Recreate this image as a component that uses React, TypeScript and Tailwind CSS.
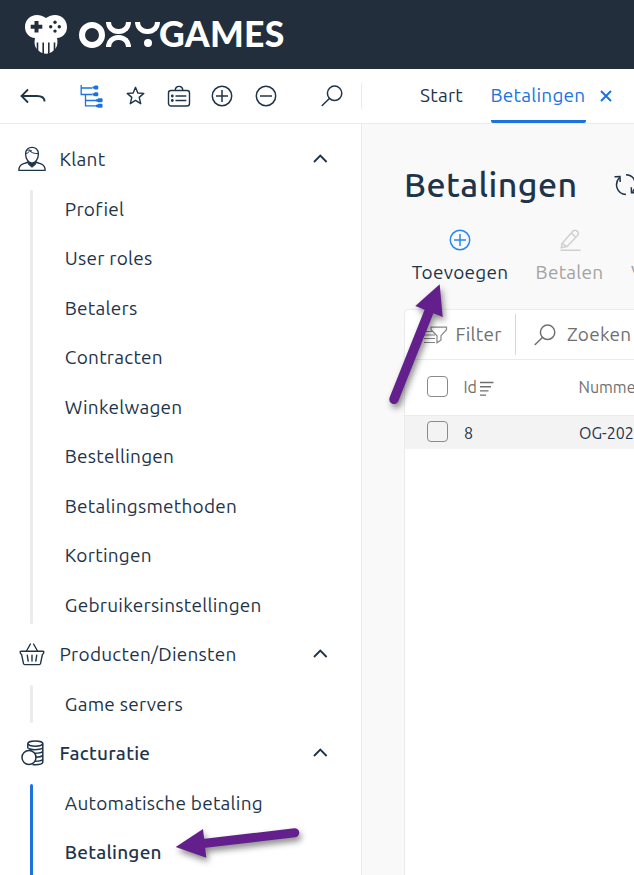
import React from 'react';

type MenuItem = { label: string; selected?: boolean };

const KLANT: MenuItem[] = [
  { label: 'Profiel' },
  { label: 'User roles' },
  { label: 'Betalers' },
  { label: 'Contracten' },
  { label: 'Winkelwagen' },
  { label: 'Bestellingen' },
  { label: 'Betalingsmethoden' },
  { label: 'Kortingen' },
  { label: 'Gebruikersinstellingen' },
];

const PRODUCTEN: MenuItem[] = [{ label: 'Game servers' }];

const FACTURATIE: MenuItem[] = [{ label: 'Automatische betaling' }, { label: 'Betalingen', selected: true }];

const UserIcon = () => (
  <svg width="28" height="26" viewBox="0 0 28 26" fill="none" stroke="currentColor" strokeWidth="1.3" strokeLinejoin="round">
    <path d="M7.600 8C7.500 3.500 10.500 1.400 14 1.400S20.500 3.500 20.400 8c0 5-3 9.200-6.400 9.200S7.600 13 7.600 8Z" />
    <path d="M7.800 7.500c2.200-.2 3.200-1.300 3.700-3 1.500 2 4.500 3.200 8.700 3.200M9.500 4.500c1.600-.8 3.200-.5 4.500.8" strokeWidth="1" />
    <path d="M10.500 15.500c-1 1.300-3.300 1.700-5.400 2.400C2.200 18.800 1 21 .8 24.300h26.400c-.2-3.300-1.400-5.500-4.300-6.400-2.100-.7-4.400-1.100-5.400-2.400" />
    <path d="M10.400 16.300c2.200 1.400 5 1.400 7.200 0l.2 1.700L14 21.300 10.200 18z" fill="currentColor" strokeWidth="1" />
  </svg>
);

const BasketIcon = () => (
  <svg className="-ml-[0.5px]" width="28" height="26" viewBox="0 0 28 26" fill="none" stroke="currentColor" strokeWidth="1.4" strokeLinecap="round" strokeLinejoin="round">
    <path d="M3 10.200h22q.9 0 .8.900l-.3 1.300q-.2.700-1 .7l-2 9.500q-.3 1-1.300 1H6.800q-1 0-1.300-1l-2-9.500q-.8 0-1-.7l-.3-1.300q-.1-.9.800-.9Z" />
    <path d="M8.500 10 12.400 3M19.500 10 15.600 3M9.300 14.300l.9 5.800M14 14.300v5.800M18.700 14.300l-.9 5.800" />
  </svg>
);

const CoinsIcon = () => (
  <svg className="-ml-[0.5px]" width="28" height="26" viewBox="0 0 28 26" fill="none" stroke="currentColor" strokeWidth="1.500">
    <ellipse cx="17.300" cy="3.600" rx="7.500" ry="2.600" />
    <path d="M9.800 3.600v5M24.800 3.600v18.500c0 1.800-3.400 2.700-7.500 2.700q-1.500 0-2.800-.3M10.500 8.500c3.500 1.900 14.300 1.300 14.300-1.200M16.500 13.300c4.200 0 8.300-.9 8.300-2.500M17.300 17.200c3.700 0 7.500-1 7.500-2.500M16.700 21.200c4.100 0 8.100-1 8.100-2.500" />
    <circle cx="11" cy="17.500" r="7" />
  </svg>
);

const Chevron = () => (
  <svg className="mr-[33px]" width="16" height="10" viewBox="0 0 16 10" fill="none" stroke="currentColor" strokeWidth="1.900">
    <path d="M2 8 8.300 1.700 14.600 8" />
  </svg>
);

const Magnifier: React.FC<{ className?: string }> = ({ className }) => (
  <svg className={className} width="22" height="22" viewBox="0 0 22 22" fill="none" stroke="currentColor" strokeWidth="1.500" strokeLinecap="round">
    <circle cx="13.600" cy="8.300" r="7.200" />
    <path d="M8.400 13.500 1.200 20.500" />
  </svg>
);

const PlusCircle: React.FC<{ minus?: boolean }> = ({ minus }) => (
  <svg width="22" height="22" viewBox="0 0 22 22" fill="none" stroke="currentColor" strokeWidth="1.500">
    <circle cx="11" cy="11" r="9.700" />
    <path d={minus ? 'M5 11h12' : 'M5 11h12M11 5v12'} />
  </svg>
);

const Section: React.FC<{
  icon: React.ReactNode;
  title: string;
  items: MenuItem[];
  active?: boolean;
}> = ({ icon, title, items, active }) => (
  <section>
    <div className="flex h-[49.5px] items-center pl-[18px]">
      <span className="w-[41.5px]">{icon}</span>
      <span className={`flex-1 ${active ? 'font-medium' : ''}`}>{title}</span>
      <Chevron />
    </div>
    <div className="flex pl-[30px]">
      <div className={`mt-[5.5px] w-[3px] rounded-sm ${active ? '-mb-[4px] bg-[#1a73e0]' : 'mb-[6px] bg-[#ebebeb]'}`} />
      <ul className="pl-[31.8px]">
        {items.map((item) => (
          <li key={item.label} className={`flex h-[49.5px] items-center ${item.selected ? 'font-medium' : ''}`}>
            {item.label}
          </li>
        ))}
      </ul>
    </div>
  </section>
);

const Logo = () => (
  <div className="flex h-full items-center pl-[25px]">
    <svg width="42" height="40" viewBox="0 0 42 40" className="shrink-0">
      <path
        d="M21 3C24 1 27 0 30 0c7 0 12 5 12 12 0 6-4 10.500-10 11 1.500 7-1 11-4 13-2 1.800-4.500 2.800-7 2.800s-5-1-7-2.800c-3-2-5.500-6-4-13C4 22.500 0 18 0 12 0 5 5 0 12 0c3 0 6 1 9 3Z"
        fill="#fff"
      />
      <path d="M9.500 6h4v3.800h3.800v4h-3.800v3.800h-4v-3.800H5.700v-4h3.800z" fill="#222e3b" />
      <g fill="#222e3b">
        <circle cx="30" cy="7.300" r="1.700" />
        <circle cx="25.700" cy="11.700" r="1.700" />
        <circle cx="34.300" cy="11.700" r="1.700" />
        <circle cx="30" cy="16.100" r="1.700" />
        <path d="M11.700 27.500h1.600V36h-1.600zM17.400 27.500H19V40h-1.600zM23 27.500h1.600V40H23zM28.700 27.500h1.600V36h-1.600z" />
      </g>
    </svg>
    <div className="ml-[12px] flex items-center text-white">
      <div className="size-[26px] rounded-full border-[6px] border-white" />
      <div className="ml-[1px] flex h-[25px] w-[25px] flex-col justify-between">
        <div className="h-[12px] rounded-b-full border-[5px] border-t-0 border-white" />
        <div className="h-[12px] rounded-t-full border-[5px] border-b-0 border-white" />
      </div>
      <div className="ml-[4px] flex h-[25px] w-[25px] flex-col items-center justify-between">
        <div className="h-[12px] w-full rounded-b-full border-[5px] border-t-0 border-white" />
        <div className="size-[8px] rounded-full bg-white" />
      </div>
      <span className="-ml-px -mt-[2px] font-['Lato',sans-serif] text-[35.500px] leading-[25px] font-black tracking-[0.3px]">GAMES</span>
    </div>
  </div>
);

const Toolbar = () => (
  <div className="flex h-[55px] items-center border-b border-[#ebebeb] bg-white">
    <div className="flex h-full w-[362px] shrink-0 items-center pb-px pl-[20px]">
      <svg className="shrink-0" width="26" height="16" viewBox="0 0 26 16" fill="none" stroke="currentColor" strokeWidth="1.800">
        <path d="M8 1.500 1.500 8 8 14.500M1.500 8h15.500c5 0 7.500 1.200 7.500 5.500" />
      </svg>
      <svg className="ml-[34px] shrink-0 text-[#1a73e0]" width="23" height="24" viewBox="0 0 23 24" fill="none" stroke="currentColor" strokeWidth="1.300">
        <path d="M1.200 1v9.500h11M1.200 4h11M5.500 10.500v11.300h11M5.500 16.500h11" />
        <path
          d="M12.500 2.500h1.200l1.200-1h2.200q1.200 0 1.200 1.200v1.500q0 1.200-1.200 1.200h-2.200q-1.200 0-1.200-.8h-1.200zM12.500 9.300h1.200l1.200-1h2.200q1.200 0 1.200 1.200V11q0 1.200-1.200 1.200h-2.200q-1.200 0-1.200-.8h-1.200zM16 15.300h1.200l1.200-1h3q1.200 0 1.200 1.200V17q0 1.200-1.200 1.200h-3q-1.200 0-1.200-.8H16zM16 20.800h1.200l1.200-1h3q1.200 0 1.200 1.200v1.500q0 1.200-1.200 1.200h-3q-1.200 0-1.200-.8H16z"
          fill="currentColor"
          stroke="none"
        />
      </svg>
      <svg className="ml-[22.500px] shrink-0" width="19" height="19" viewBox="0 0 19 19" fill="none" stroke="currentColor" strokeWidth="1.400" strokeLinejoin="round">
        <path d="m9.500 1.300 2.300 5.700 6 .4-4.600 4 1.500 6.300-5.200-3.300-5.200 3.300 1.500-6.300-4.600-4 6-.4z" />
      </svg>
      <svg className="ml-[22.500px] shrink-0" width="24" height="22" viewBox="0 0 24 22" fill="none" stroke="currentColor" strokeWidth="1.400">
        <rect x="1.500" y="5.500" width="21" height="15.500" rx="2.500" />
        <path d="M8.200 5.500c0-5.500 7.600-5.500 7.600 0M8.500 11h10.800M8.500 15.500h10.800" />
        <circle cx="5.300" cy="11" r=".7" fill="currentColor" />
        <circle cx="5.300" cy="15.500" r=".7" fill="currentColor" />
      </svg>
      <div className="ml-[20px] flex gap-[22px]">
        <PlusCircle />
        <PlusCircle minus />
      </div>
      <Magnifier className="ml-[44px]" />
      <div className="ml-auto h-[26px] w-px bg-[#ebebeb]" />
    </div>
    <nav className="flex h-full items-center pl-[58px]">
      <span className="w-[43px] pb-[2px]">Start</span>
      <div className="ml-[27.500px] flex h-full items-center text-[#1a73e0]">
        <span className="flex h-[54px] w-[95px] items-center rounded-xs border-b-[3px] border-[#1a73e0] pt-px">Betalingen</span>
        <svg className="ml-[14px]" width="12" height="12" viewBox="0 0 12 12" fill="none" stroke="currentColor" strokeWidth="2">
          <path d="m1 1 10 10M11 1 1 11" />
        </svg>
      </div>
    </nav>
  </div>
);

const Checkbox = () => <span className="mb-[2px] size-[21px] shrink-0 rounded-[4px] border border-[#8a8a8a] bg-transparent" />;

const Content = () => (
  <main className="min-w-0 flex-1 overflow-hidden pl-[42px] text-nowrap">
    <div className="flex h-[104px] items-center pt-[18px]">
      <h1 className="w-[173px] pb-[2px] text-[34px] font-medium tracking-[0.45px]">Betalingen</h1>
      <svg className="ml-[36.500px] shrink-0" width="24" height="24" viewBox="0 0 24 24" fill="none" stroke="currentColor" strokeWidth="1.500">
        <path d="M12 21.500C3 21.300-.3 11 5.500 4.500M12 1.800c9 .2 12.300 10.500 6.500 17" />
        <path d="M.5 3.800l5.500-.3.200 5.500M23 19.500l-5.500.3-.2-5.500" />
      </svg>
    </div>
    <div className="flex h-[81px] items-start pl-[7px] pt-px">
      <button className="flex w-[98px] shrink-0 flex-col items-center">
        <span className="flex h-[29px] items-start text-[#2b87f0]">
          <PlusCircle />
        </span>
        <span className="leading-[28px]">Toevoegen</span>
      </button>
      <button className="ml-[25.500px] flex w-[70px] shrink-0 flex-col items-center text-[#a3a3a3]">
        <span className="flex h-[29px] items-start">
          <svg width="22" height="22" viewBox="0 0 22 22" fill="none" stroke="#d0d0d0" strokeWidth="1.500" strokeLinejoin="round">
            <path d="M3 14.500 13.800 2.300q2-2 4.300-.1t.4 4.300L8 17.600l-5.800 1.200zM12.300 4l4.600 4.200M3 14.500l5 3.100M1.500 21.300h20" />
          </svg>
        </span>
        <span className="leading-[28px]">Betalen</span>
      </button>
      <button className="ml-[26.500px] pt-[29px] leading-[28px] text-[#a3a3a3]">Verwijderen</button>
    </div>
    <div className="h-[600px] w-[600px] rounded-tl-[4px] border border-[#ebebeb] bg-white text-[#707070]">
      <div className="flex h-[50px] items-center border-b border-[#ebebeb]">
        <svg className="ml-[17px]" width="26" height="18" viewBox="0 0 26 18" fill="none" stroke="#858585" strokeWidth="1.200">
          <path d="M2 5.500h9M2 9h11M2 12.500h11M2 16.500h11" />
          <path d="M9 1.200h15.500v2.500l-5.500 6V14l-4 2.800v-7L9 3.700z" fill="#fff" />
        </svg>
        <span className="ml-[7.500px] w-[60.500px]">Filter</span>
        <div className="-ml-[1px] h-[41px] w-px bg-[#d8d8d8]" />
        <Magnifier className="ml-[18px] shrink-0" />
        <span className="ml-[11px]">Zoeken</span>
      </div>
      <div className="flex h-[55px] items-center pl-[22px] text-[16px] tracking-normal">
        <Checkbox />
        <div className="ml-[15.500px] flex w-[115px] items-center pb-[2px]">
          Id
          <svg className="ml-[3px] mt-[4px]" width="14" height="16" viewBox="0 0 14 16" fill="none" stroke="currentColor" strokeWidth="1.400">
            <path d="M0 1.500h13.500M0 5.700h11M0 9.900h8.500M0 14.100h6" />
          </svg>
        </div>
        <span className="pb-[2px]">Nummer</span>
      </div>
      <div className="flex h-[34px] items-center border-t border-[#ebebeb] bg-[#f3f3f3] pl-[22px] text-[16px] tracking-normal text-[#1e344b]">
        <Checkbox />
        <span className="ml-[16px] w-[115px]">8</span>
        <span>OG-20230008</span>
      </div>
    </div>
  </main>
);

// Purple pointer arrows drawn on top of the page
const Arrows = () => (
  <svg
    className="pointer-events-none absolute inset-0 drop-shadow-[2px_4px_3px_rgba(0,0,0,0.45)]"
    width="634"
    height="875"
    viewBox="0 0 634 875"
    fill="#63208c"
    stroke="#63208c"
    strokeLinecap="round"
  >
    <path d="M394 399.300 430 309" strokeWidth="9.500" />
    <path d="m439.700 284.300 3 32.700-27.400-11z" stroke="none" />
    <path d="M294.800 832.800 203 843.500" strokeWidth="9" />
    <path d="m175.700 847 27.300-18 3.300 28.700z" stroke="none" />
  </svg>
);

const App: React.FC = () => (
  <div className="relative flex h-[875px] w-[634px] flex-col overflow-hidden bg-[#f9f9f9] font-['Ubuntu','Noto_Sans',sans-serif] text-[19px] tracking-[0.25px] text-[#1e344b]">
    <header className="h-[69px] shrink-0 bg-[#222e3b]">
      <Logo />
    </header>
    <div className="shrink-0">
      <Toolbar />
    </div>
    <div className="flex min-h-0 flex-1">
      <aside className="w-[362px] shrink-0 overflow-hidden border-r border-[#ebebeb] bg-white pt-[10.7px]">
        <Section icon={<UserIcon />} title="Klant" items={KLANT} />
        <Section icon={<BasketIcon />} title="Producten/Diensten" items={PRODUCTEN} />
        <Section icon={<CoinsIcon />} title="Facturatie" items={FACTURATIE} active />
      </aside>
      <Content />
    </div>
    <Arrows />
  </div>
);

export default App;
